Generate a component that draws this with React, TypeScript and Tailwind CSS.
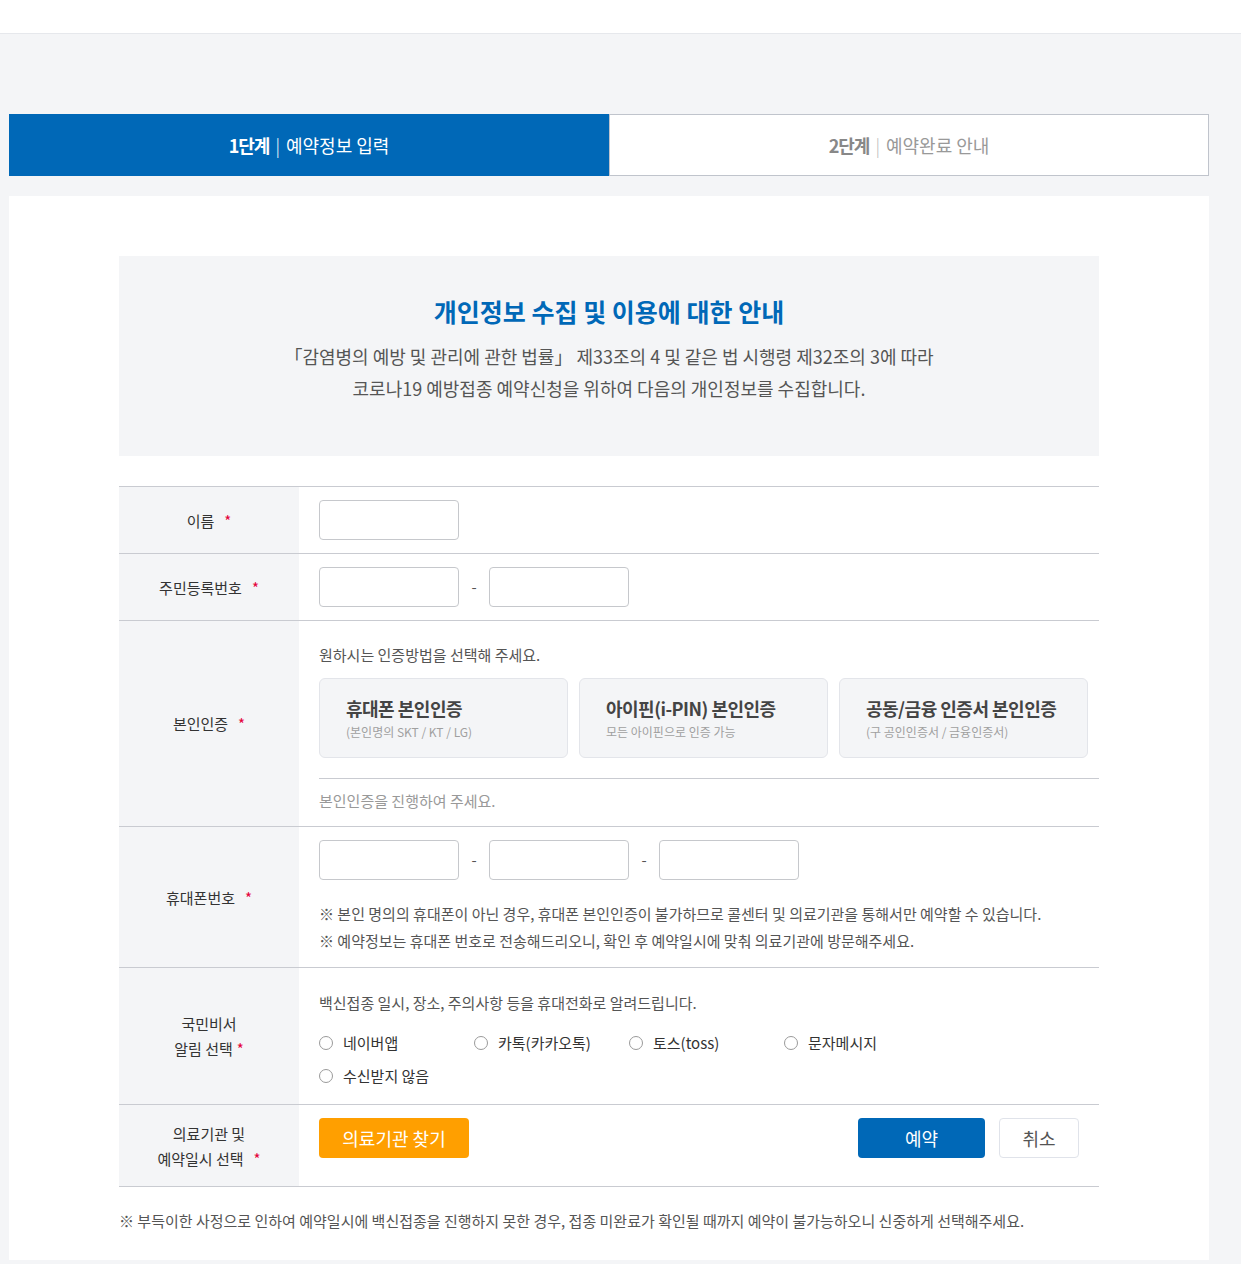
import React from 'react';

const FONT = "font-['Noto_Sans_CJK_KR','Noto_Sans',sans-serif]";

const Star = () => <span className="ml-2.5 text-[#e4003a]">*</span>;

const Row = ({ label, children, className = '' }: { label: React.ReactNode; children: React.ReactNode; className?: string }) => (
  <div className="flex border-b border-[#c9cbd1]">
    <div className="w-[180px] shrink-0 bg-[#f4f5f7] flex items-center justify-center text-center text-[15px] text-[#333] leading-[25px]">
      {label}
    </div>
    <div className={`flex-1 pl-5 ${className}`}>{children}</div>
  </div>
);

const Input = () => (
  <input className="w-[140px] h-10 rounded border border-[#c6c8cc] bg-white outline-none" />
);

const Dash = () => <span className="w-[30px] text-center text-[15px] text-[#555]">-</span>;

const CertCard = ({ title, sub }: { title: string; sub: string }) => (
  <button className="w-[249px] h-20 rounded-md border border-[#e3e5ea] bg-[#f4f5f7] text-left pl-[26px]">
    <div className="text-[18px] font-bold text-[#444] leading-6 tracking-[-0.5px]">{title}</div>
    <div className="mt-1 text-[12px] text-[#a0a0a0] leading-4">{sub}</div>
  </button>
);

const Radio = ({ label, w = 'w-[155px]' }: { label: string; w?: string }) => (
  <label className={`${w} flex items-center gap-2.5 text-[15px] text-[#333]`}>
    <span className="w-[14px] h-[14px] rounded-full border-[1.5px] border-[#9a9a9a] bg-white" />
    {label}
  </label>
);

export default function App() {
  return (
    <div className={`${FONT} min-h-[1264px] bg-[#f4f5f7]`}>
      <header className="h-[34px] bg-white border-b border-[#e6e8ec]" />

      <div className="ml-[9px] w-[1200px] pt-20">
        {/* steps */}
        <div className="flex h-[62px]">
          <div className="w-[600px] bg-[#0068b7] flex items-center justify-center text-white text-[18px]">
            <span className="font-bold tracking-[-1px]">1단계</span>
            <span className="mx-1.5 font-light">|</span>
            <span>예약정보 입력</span>
          </div>
          <div className="w-[600px] bg-white border border-[#c0c4cc] flex items-center justify-center text-[#999] text-[18px]">
            <span className="font-bold tracking-[-1px] text-[#888]">2단계</span>
            <span className="mx-1.5 font-light text-[#bbb]">|</span>
            <span>예약완료 안내</span>
          </div>
        </div>

        {/* card */}
        <div className="mt-5 bg-white px-[110px] pt-[60px] pb-[29px]">
          <div className="h-[200px] bg-[#f4f5f7] flex flex-col items-center pt-[37px]">
            <h2 className="text-[25px] font-bold text-[#0068b7] leading-9">개인정보 수집 및 이용에 대한 안내</h2>
            <p className="mt-[11px] text-[18px] text-[#555] leading-8 text-center">
              「감염병의 예방 및 관리에 관한 법률」 제33조의 4 및 같은 법 시행령 제32조의 3에 따라
              <br />
              코로나19 예방접종 예약신청을 위하여 다음의 개인정보를 수집합니다.
            </p>
          </div>

          <div className="mt-[30px] border-t border-[#c9cbd1]">
            <Row label={<span>이름<Star /></span>} className="h-[66px] flex items-center">
              <Input />
            </Row>
            <Row label={<span>주민등록번호<Star /></span>} className="h-[66px] flex items-center">
              <Input />
              <Dash />
              <Input />
            </Row>
            <Row label={<span>본인인증<Star /></span>} className="h-[205px] pt-6 pr-0">
              <div className="text-[15px] text-[#555] leading-5">원하시는 인증방법을 선택해 주세요.</div>
              <div className="mt-[13px] flex gap-[11px]">
                <CertCard title="휴대폰 본인인증" sub="(본인명의 SKT / KT / LG)" />
                <CertCard title="아이핀(i-PIN) 본인인증" sub="모든 아이핀으로 인증 가능" />
                <CertCard title="공동/금융 인증서 본인인증" sub="(구 공인인증서 / 금융인증서)" />
              </div>
              <div className="mt-5 border-t border-[#c9cbd1] pt-[12px] text-[15px] text-[#999] leading-5">본인인증을 진행하여 주세요.</div>
            </Row>
            <Row label={<span>휴대폰번호<Star /></span>} className="h-[140px] pt-[13px]">
              <div className="flex items-center">
                <Input />
                <Dash />
                <Input />
                <Dash />
                <Input />
              </div>
              <div className="mt-[20px] text-[15px] text-[#555] leading-[27px]">
                <p>※ 본인 명의의 휴대폰이 아닌 경우, 휴대폰 본인인증이 불가하므로 콜센터 및 의료기관을 통해서만 예약할 수 있습니다.</p>
                <p>※ 예약정보는 휴대폰 번호로 전송해드리오니, 확인 후 예약일시에 맞춰 의료기관에 방문해주세요.</p>
              </div>
            </Row>
            <Row
              label={
                <span>
                  국민비서
                  <br />
                  알림 선택<span className="ml-1 text-[#e4003a]">*</span>
                </span>
              }
              className="h-[136px] pt-[25px]"
            >
              <div className="text-[15px] text-[#555] leading-5">백신접종 일시, 장소, 주의사항 등을 휴대전화로 알려드립니다.</div>
              <div className="mt-[20px] flex leading-5">
                <Radio label="네이버앱" />
                <Radio label="카톡(카카오톡)" />
                <Radio label="토스(toss)" />
                <Radio label="문자메시지" />
              </div>
              <div className="mt-[13px] flex leading-5">
                <Radio label="수신받지 않음" />
              </div>
            </Row>
            <Row
              label={
                <span>
                  의료기관 및
                  <br />
                  예약일시 선택<Star />
                </span>
              }
              className="h-[81px] flex items-start pt-[13px] pr-5"
            >
              <button className="w-[150px] h-10 rounded bg-[#ff9f00] text-white text-[18px]">의료기관 찾기</button>
              <div className="ml-auto flex gap-[14px]">
                <button className="w-[127px] h-10 rounded bg-[#0068b7] text-white text-[18px]">예약</button>
                <button className="w-[80px] h-10 rounded border border-[#e0e3ea] bg-white text-[#555] text-[18px]">취소</button>
              </div>
            </Row>
          </div>

          <p className="mt-[24px] text-[15px] text-[#555] leading-5">
            ※ 부득이한 사정으로 인하여 예약일시에 백신접종을 진행하지 못한 경우, 접종 미완료가 확인될 때까지 예약이 불가능하오니 신중하게 선택해주세요.
          </p>
        </div>
      </div>
    </div>
  );
}
